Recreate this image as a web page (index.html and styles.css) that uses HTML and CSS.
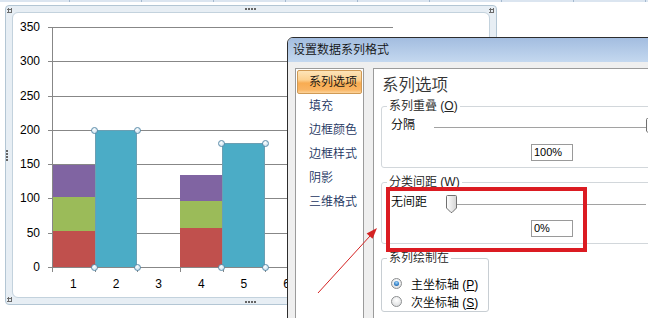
FILE: index.html
```html
<!DOCTYPE html>
<html lang="zh">
<head>
<meta charset="utf-8">
<title>设置数据系列格式</title>
<link rel="stylesheet" href="styles.css">
</head>
<body>
<div class="page">
  <div class="topbar"></div>

  <div class="chart-frame">
    <span class="grip grip-tl"></span>
    <span class="grip grip-top"></span>
    <span class="grip grip-tr"></span>
    <span class="grip grip-left"></span>
    <span class="grip grip-bl"></span>
    <span class="grip grip-bottom"></span>
    <div class="chart-inner">
      <div class="y-labels">
        <span>350</span><span>300</span><span>250</span><span>200</span>
        <span>150</span><span>100</span><span>50</span><span>0</span>
      </div>
      <div class="plot">
        <div class="gridlines"><i></i><i></i><i></i><i></i><i></i><i></i><i></i><i></i></div>
        <div class="bars">
          <div class="stack w42">
            <div class="seg purple" style="height:32px"></div>
            <div class="seg green" style="height:34px"></div>
            <div class="seg red" style="height:36px"></div>
          </div>
          <div class="bar blue w42" style="height:137px">
            <span class="handle h-tl"></span><span class="handle h-tr"></span>
            <span class="handle h-bl"></span><span class="handle h-br"></span>
          </div>
          <div class="spacer w43"></div>
          <div class="stack w42">
            <div class="seg purple" style="height:26px"></div>
            <div class="seg green" style="height:27px"></div>
            <div class="seg red" style="height:39px"></div>
          </div>
          <div class="bar blue w43" style="height:124px">
            <span class="handle h-tl"></span><span class="handle h-tr"></span>
            <span class="handle h-bl"></span><span class="handle h-br"></span>
          </div>
        </div>
      </div>
      <div class="x-axis">
        <span>1</span><span>2</span><span>3</span><span>4</span>
        <span>5</span><span>6</span><span>7</span><span>8</span>
      </div>
    </div>
  </div>

  <div class="dialog">
    <div class="titlebar">设置数据系列格式</div>
    <div class="dlg-body">
      <ul class="nav">
        <li class="active">系列选项</li>
        <li>填充</li>
        <li>边框颜色</li>
        <li>边框样式</li>
        <li>阴影</li>
        <li>三维格式</li>
      </ul>
      <div class="panel">
        <h2>系列选项</h2>
        <fieldset class="group wide">
          <legend>系列重叠 (<u>O</u>)</legend>
          <div class="slider-row">
            <span class="lbl">分隔</span>
            <div class="slider">
              <svg class="thumb" style="left:calc(100% - 10px)" width="11" height="18" viewBox="0 0 11 18"><defs><linearGradient id="tg1" x1="0" y1="0" x2="1" y2="0"><stop offset="0" stop-color="#ffffff"/><stop offset="1" stop-color="#d4d4d4"/></linearGradient></defs><path d="M1.5 .5H9.5Q10.5 .5 10.5 1.5V13L6 17.5H5L.5 13V1.5Q.5 .5 1.5 .5Z" fill="url(#tg1)" stroke="#707070"/></svg>
            </div>
          </div>
          <div class="value-row"><span class="textbox">100%</span></div>
        </fieldset>
        <fieldset class="group wide">
          <legend>分类间距 (<u>W</u>)</legend>
          <div class="slider-row">
            <span class="lbl">无间距</span>
            <div class="slider">
              <svg class="thumb" style="left:0" width="11" height="18" viewBox="0 0 11 18"><defs><linearGradient id="tg2" x1="0" y1="0" x2="1" y2="0"><stop offset="0" stop-color="#ffffff"/><stop offset="1" stop-color="#d4d4d4"/></linearGradient></defs><path d="M1.5 .5H9.5Q10.5 .5 10.5 1.5V13L6 17.5H5L.5 13V1.5Q.5 .5 1.5 .5Z" fill="url(#tg2)" stroke="#707070"/></svg>
            </div>
          </div>
          <div class="value-row"><span class="textbox">0%</span></div>
        </fieldset>
        <fieldset class="group narrow">
          <legend>系列绘制在</legend>
          <div class="radio-row first"><span class="radio on"></span><span>主坐标轴 (<u>P</u>)</span></div>
          <div class="radio-row"><span class="radio"></span><span>次坐标轴 (<u>S</u>)</span></div>
        </fieldset>
      </div>
    </div>
  </div>

  <div class="callout-box"></div>
  <svg class="callout-arrow" width="80" height="80" viewBox="0 0 80 80">
    <line x1="8" y1="73" x2="60" y2="16" stroke="#d42222" stroke-width="1"/>
    <polygon points="67,8 62.6,18.8 56.6,13.4" fill="#d42222"/>
  </svg>
</div>
</body>
</html>
```

FILE: styles.css
```css
* { box-sizing: border-box; }

html, body {
  margin: 0;
  padding: 0;
  background: #ffffff;
}

body {
  font-family: "Liberation Sans", "Noto Sans CJK SC", sans-serif;
  font-size: 12px;
  color: #000;
}

.page {
  position: relative;
  width: 648px;
  height: 318px;
  overflow: hidden;
}

.topbar {
  height: 2px;
  background: repeating-linear-gradient(90deg, #dbe5f0 0 71px, #a4b9cf 71px 72px);
  background-position: -2px 0;
}

/* ---------- chart ---------- */
.chart-frame {
  position: relative;
  margin: 3px 0 0 5px;
  width: 492px;
  height: 300px;
  border: 1px solid #b3c6d4;
  border-radius: 4px;
  background: #e7eef4;
  padding: 6px;
}

.grip {
  position: absolute;
  display: block;
}
.grip-tl, .grip-tr, .grip-bl {
  width: 5px;
  height: 5px;
  background: radial-gradient(circle, #6b6b6b 0 1px, transparent 1.2px) 0 0 / 3px 3px;
}
.grip-tl { left: 1px; top: 2px; }
.grip-tr { left: 483px; top: 2px; }
.grip-bl { left: 1px; top: 291px; }
.grip-top, .grip-bottom {
  width: 11px;
  height: 2px;
  background: repeating-linear-gradient(90deg, #656565 0 2px, transparent 2px 3px);
}
.grip-top { left: 239px; top: 2px; }
.grip-bottom { left: 239px; top: 295px; }
.grip-left {
  left: 0;
  top: 144px;
  width: 2px;
  height: 11px;
  background: repeating-linear-gradient(180deg, #656565 0 2px, transparent 2px 3px);
}

.chart-inner {
  height: 100%;
  border: 1px solid #c3d2dd;
  border-radius: 6px;
  background: #ffffff;
  padding-top: 14px;
  display: grid;
  grid-template-columns: 35px 345px;
  grid-template-rows: 241px auto;
}

.y-labels {
  grid-column: 1;
  grid-row: 1;
  align-self: start;
  margin-top: -7px;
  height: 254px;
  padding-right: 8px;
  display: flex;
  flex-direction: column;
  justify-content: space-between;
  align-items: flex-end;
  font-size: 12px;
}
.y-labels span { line-height: 14px; }

.plot {
  grid-column: 2;
  grid-row: 1;
  display: grid;
}

.gridlines {
  grid-area: 1 / 1;
  height: 241px;
  display: flex;
  flex-direction: column;
  justify-content: space-between;
}
.gridlines i {
  display: block;
  height: 1px;
  background: #878787;
}

.bars {
  grid-area: 1 / 1;
  align-self: start;
  margin-left: 4px;
  height: 240px;
  border-left: 1px solid #878787;
  display: flex;
  align-items: flex-end;
}

.w42 { width: 42px; flex: none; }
.w43 { width: 43px; flex: none; }
.spacer { height: 1px; }

.stack {
  display: flex;
  flex-direction: column;
}
.seg { width: 100%; }
.red { background: #c0504d; }
.green { background: #9bbb59; }
.purple { background: #8064a2; }

.bar { position: relative; }
.blue {
  background: #4bacc6;
  box-shadow: inset 1px 0 0 #6a9fb3, inset -1px 0 0 #6a9fb3, inset 0 1px 0 #6a9fb3;
}

.handle {
  position: absolute;
  width: 7px;
  height: 7px;
  border-radius: 50%;
  border: 1px solid #5e8eab;
  background: radial-gradient(circle at 40% 35%, #ffffff, #b9d6e8);
}
.h-tl { left: -4px; top: -3px; }
.h-tr { right: -4px; top: -3px; }
.h-bl { left: -4px; bottom: -4px; }
.h-br { right: -4px; bottom: -4px; }

.x-axis {
  grid-column: 2;
  grid-row: 2;
  margin-left: 4px;
  display: flex;
  font-size: 12px;
}
.x-axis span {
  flex: none;
  width: 42.67px;
  text-align: center;
  line-height: 14px;
}
.x-axis span::before {
  content: "";
  display: block;
  width: 1px;
  height: 4px;
  margin-bottom: 5px;
  background: #878787;
}

/* ---------- dialog ---------- */
.dialog {
  position: absolute;
  left: 287px;
  top: 37px;
  width: 380px;
  height: 300px;
  border: 1px solid #2d2d2d;
  border-radius: 6px 6px 0 0;
  background: #efefef;
  display: flex;
  flex-direction: column;
  overflow: hidden;
  font-weight: 350;
}

.titlebar {
  flex: none;
  height: 24px;
  line-height: 24px;
  padding-left: 5px;
  font-size: 12px;
  color: #111;
  background: linear-gradient(#a3bde0, #c4d8ef);
}

.dlg-body {
  flex: 1;
  display: flex;
  padding: 6px 0 0 7px;
}

.nav {
  list-style: none;
  margin: 0;
  padding: 1px;
  width: 69px;
  flex: none;
  border: 1px solid #9b9b9b;
  border-bottom: none;
  background: #fff;
}
.nav li {
  height: 24px;
  line-height: 24px;
  padding-left: 12px;
  color: #1a3460;
  white-space: nowrap;
}
.nav li.active {
  padding-left: 11px;
  line-height: 22px;
  color: #111;
  border: 1px solid #d09a55;
  border-radius: 2px;
  background: linear-gradient(#fde4b8 0%, #fcd191 40%, #f8ac52 55%, #f9b462 85%, #fcd39a 100%);
}

.panel {
  flex: 1;
  margin-left: 9px;
  border: 1px solid #9b9b9b;
  border-right: none;
  border-bottom: none;
  background: #fff;
  padding-left: 7px;
}

.panel h2 {
  margin: 0 0 0 1px;
  padding-top: 6px;
  font-size: 16.5px;
  line-height: 20px;
  font-weight: 350;
  color: #333;
}

.group {
  margin: 0;
  padding: 0;
  min-width: 0;
  border: 1px solid #d2d7db;
  border-radius: 3px;
}
.group legend {
  margin-left: 5px;
  padding: 0 2px;
  line-height: 14px;
  font-size: 12px;
  color: #222;
}
.group.wide {
  margin-top: 4px;
  width: 300px;
}
.group.wide + .group { margin-top: 7px; }
.group.narrow {
  width: 108px;
  border-color: #c8ced3;
  padding-bottom: 1px;
}

.slider-row {
  display: flex;
  align-items: center;
  height: 18px;
  margin-top: 3px;
  padding: 0 24px 0 9px;
}
.group + .group .slider-row { margin-top: 4px; }
.lbl { line-height: 18px; white-space: nowrap; }

.slider {
  position: relative;
  flex: 1;
  height: 18px;
  margin-left: 19px;
  background: linear-gradient(#a2a2a2, #a2a2a2) no-repeat 0 11px / calc(100% - 10px) 1px;
}
.thumb {
  position: absolute;
  top: 2px;
  display: block;
}

.value-row {
  margin-top: 10px;
  padding: 0 0 6px 149px;
}
.group + .group .value-row { margin-top: 9px; }

.textbox {
  display: block;
  width: 42px;
  height: 17px;
  border: 1px solid #9a9a9a;
  padding-left: 2px;
  font-size: 11px;
  line-height: 15px;
  font-weight: normal;
  color: #000;
}

.radio-row {
  display: flex;
  align-items: center;
  height: 18px;
  padding-left: 9px;
  gap: 9px;
  white-space: nowrap;
}
.radio-row.first { margin-top: 9px; }

.radio {
  flex: none;
  width: 11px;
  height: 11px;
  border-radius: 50%;
  border: 1px solid #8c8e90;
  background: radial-gradient(circle at 50% 35%, #ffffff, #d6d8da);
}
.radio.on::after {
  content: "";
  display: block;
  margin: 2px;
  width: 5px;
  height: 5px;
  border-radius: 50%;
  background: radial-gradient(circle at 50% 35%, #a6d6f7, #2d7cc6 60%, #1a4e8a);
}

/* ---------- annotations ---------- */
.callout-box {
  position: absolute;
  left: 386px;
  top: 187px;
  width: 201px;
  height: 65px;
  border: 4px solid #db1b22;
}

.callout-arrow {
  position: absolute;
  left: 310px;
  top: 220px;
}
```
